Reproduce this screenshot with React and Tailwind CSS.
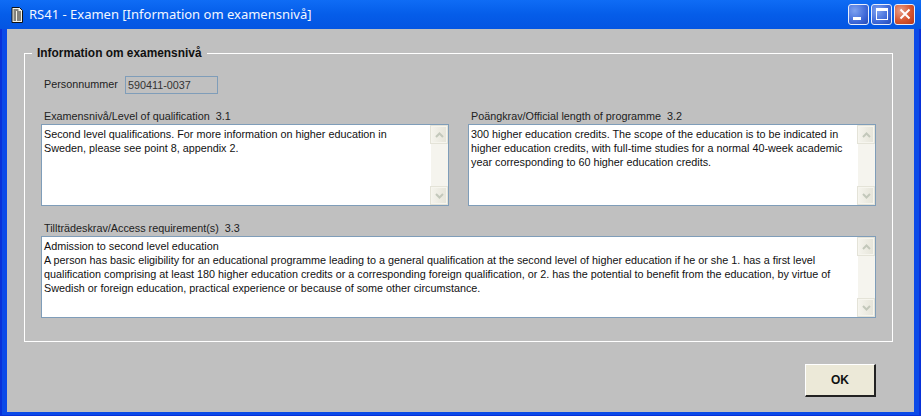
const font = { fontFamily: '"Liberation Sans", Arial, sans-serif' };

function Chevron({ up }) {
  return (
    <svg width="9" height="6" viewBox="0 0 9 6" className="block">
      <path d={up ? "M1 5 L4.5 1.5 L8 5" : "M1 1 L4.5 4.5 L8 1"} fill="none" stroke="#c3c8bb" strokeWidth="2" />
    </svg>
  );
}

function ScrollButton({ up }) {
  return (
    <div className="w-[16px] h-[17px] flex items-center justify-center bg-gradient-to-r from-[#f4f3ec] to-[#e6e5da] border border-[#f6f5ee] shadow-[0_0_0_1px_#e4e3d8]">
      <Chevron up={up} />
    </div>
  );
}

function TextBox({ lines }) {
  return (
    <div className="flex h-[82px] bg-white border border-[#7f9db9]">
      <div className="flex-1 pl-[2px] pt-[2px] text-[10.8px] leading-[14px] text-[#111] whitespace-pre">
        {lines.map((l) => (
          <div key={l}>{l}</div>
        ))}
      </div>
      <div className="w-[17px] flex flex-col justify-between bg-[#f5f4ee] pt-[1px] pb-[1px]">
        <ScrollButton up />
        <ScrollButton />
      </div>
    </div>
  );
}

function Field({ label, lines, className }) {
  return (
    <div className={className}>
      <div className="h-[15px] pl-[3px] text-[10.8px] leading-[14px] text-[#222] whitespace-pre">{label}</div>
      <TextBox lines={lines} />
    </div>
  );
}

function DocIcon() {
  return (
    <svg width="14" height="16" viewBox="0 0 14 16" className="block">
      <path d="M2 0.5 H9.5 L12.5 3.5 V15.5 H2 Z" fill="#f6f4e8" stroke="#111" />
      <path d="M3.5 3 H8.5 M3.5 5 H11 M3.5 7 H11 M3.5 9 H11 M3.5 11 H11 M3.5 13 H11" stroke="#111" strokeWidth="1.1" />
      <path d="M6.5 4 V14" stroke="#f6f4e8" strokeWidth="1" />
    </svg>
  );
}

function WinButton({ children, red }) {
  return (
    <div
      className={
        "w-[21px] h-[21px] rounded-[3px] border border-[#e8eefc] flex items-center justify-center " +
        (red
          ? "bg-[radial-gradient(circle_at_30%_30%,#e8a08a,#d6552f_55%,#b4361a)]"
          : "bg-[radial-gradient(circle_at_30%_30%,#7ea2f0,#3f69d8_60%,#2349b8)]")
      }
    >
      {children}
    </div>
  );
}

export default function App() {
  return (
    <div style={font} className="w-[921px] h-[416px] flex flex-col overflow-hidden bg-[#0b4ae8]">
      <div className="h-[29px] shrink-0 flex items-center pl-[10px] pr-[6px] bg-gradient-to-b from-[#0f6cf5] via-[#055de9] to-[#0455e2]">
        <DocIcon />
        <div style={{ fontFamily: '"Noto Sans", sans-serif' }} className="ml-[5px] text-[13px] text-[#f2f6ff] whitespace-pre flex-1">
          RS41 - Examen [Information om examensnivå]
        </div>
        <div className="flex gap-[2px] mb-[1px]">
          <WinButton>
            <div className="w-[8px] h-[3px] bg-white mt-[9px] mr-[4px]" />
          </WinButton>
          <WinButton>
            <div className="w-[12px] h-[12px] border border-white border-t-[3px]" />
          </WinButton>
          <WinButton red>
            <svg width="12" height="12" viewBox="0 0 12 12">
              <path d="M1.5 1.5 L10.5 10.5 M10.5 1.5 L1.5 10.5" stroke="#fff" strokeWidth="2" />
            </svg>
          </WinButton>
        </div>
      </div>

      <div className="flex-1 min-h-0 border-x-[2px] border-b-[1px] border-[#0831d9] pb-[3px] px-[5px] flex flex-col">
        <div className="flex-1 bg-[#c0c0c0] pl-[17px] pr-[21px] pt-[24px] flex flex-col">
          <div className="relative h-[289px] border border-white pl-[16px] pr-[16px] pt-[22px] shrink-0">
            <div className="absolute left-[7px] top-[-8px] bg-[#c0c0c0] px-[5px] text-[11.9px] leading-[14px] font-bold text-[#111]">
              Information om examensnivå
            </div>
            <div className="flex items-center h-[18px]">
              <div className="w-[84px] pl-[3px] pb-[2px] text-[10.8px] text-[#222]">Personnummer</div>
              <div className="w-[93px] h-[18px] border border-[#7f9db9] pl-[2px] text-[10.8px] leading-[16px] text-[#333]">590411-0037</div>
            </div>
            <div className="flex gap-[19px] mt-[15px]">
              <Field
                className="w-[408px]"
                label="Examensnivå/Level of qualification  3.1"
                lines={[
                  "Second level qualifications. For more information on higher education in",
                  "Sweden, please see point 8, appendix 2.",
                ]}
              />
              <Field
                className="w-[408px]"
                label="Poängkrav/Official length of programme  3.2"
                lines={[
                  "300 higher education credits. The scope of the education is to be indicated in",
                  "higher education credits, with full-time studies for a normal 40-week academic",
                  "year corresponding to 60 higher education credits.",
                ]}
              />
            </div>
            <Field
              className="mt-[15px] w-[835px]"
              label="Tillträdeskrav/Access requirement(s)  3.3"
              lines={[
                "Admission to second level education",
                "A person has basic eligibility for an educational programme leading to a general qualification at the second level of higher education if he or she 1. has a first level",
                "qualification comprising at least 180 higher education credits or a corresponding foreign qualification, or 2. has the potential to benefit from the education, by virtue of",
                "Swedish or foreign education, practical experience or because of some other circumstance.",
              ]}
            />
          </div>
          <div className="flex justify-end mt-[22px] mr-[17px]">
            <div className="w-[71px] h-[33px] bg-[#ece9d8] border-r-2 border-b-2 border-[#222] border-t border-l border-t-white border-l-white flex items-center justify-center text-[12px] font-bold text-[#111]">
              OK
            </div>
          </div>
        </div>
      </div>
    </div>
  );
}
